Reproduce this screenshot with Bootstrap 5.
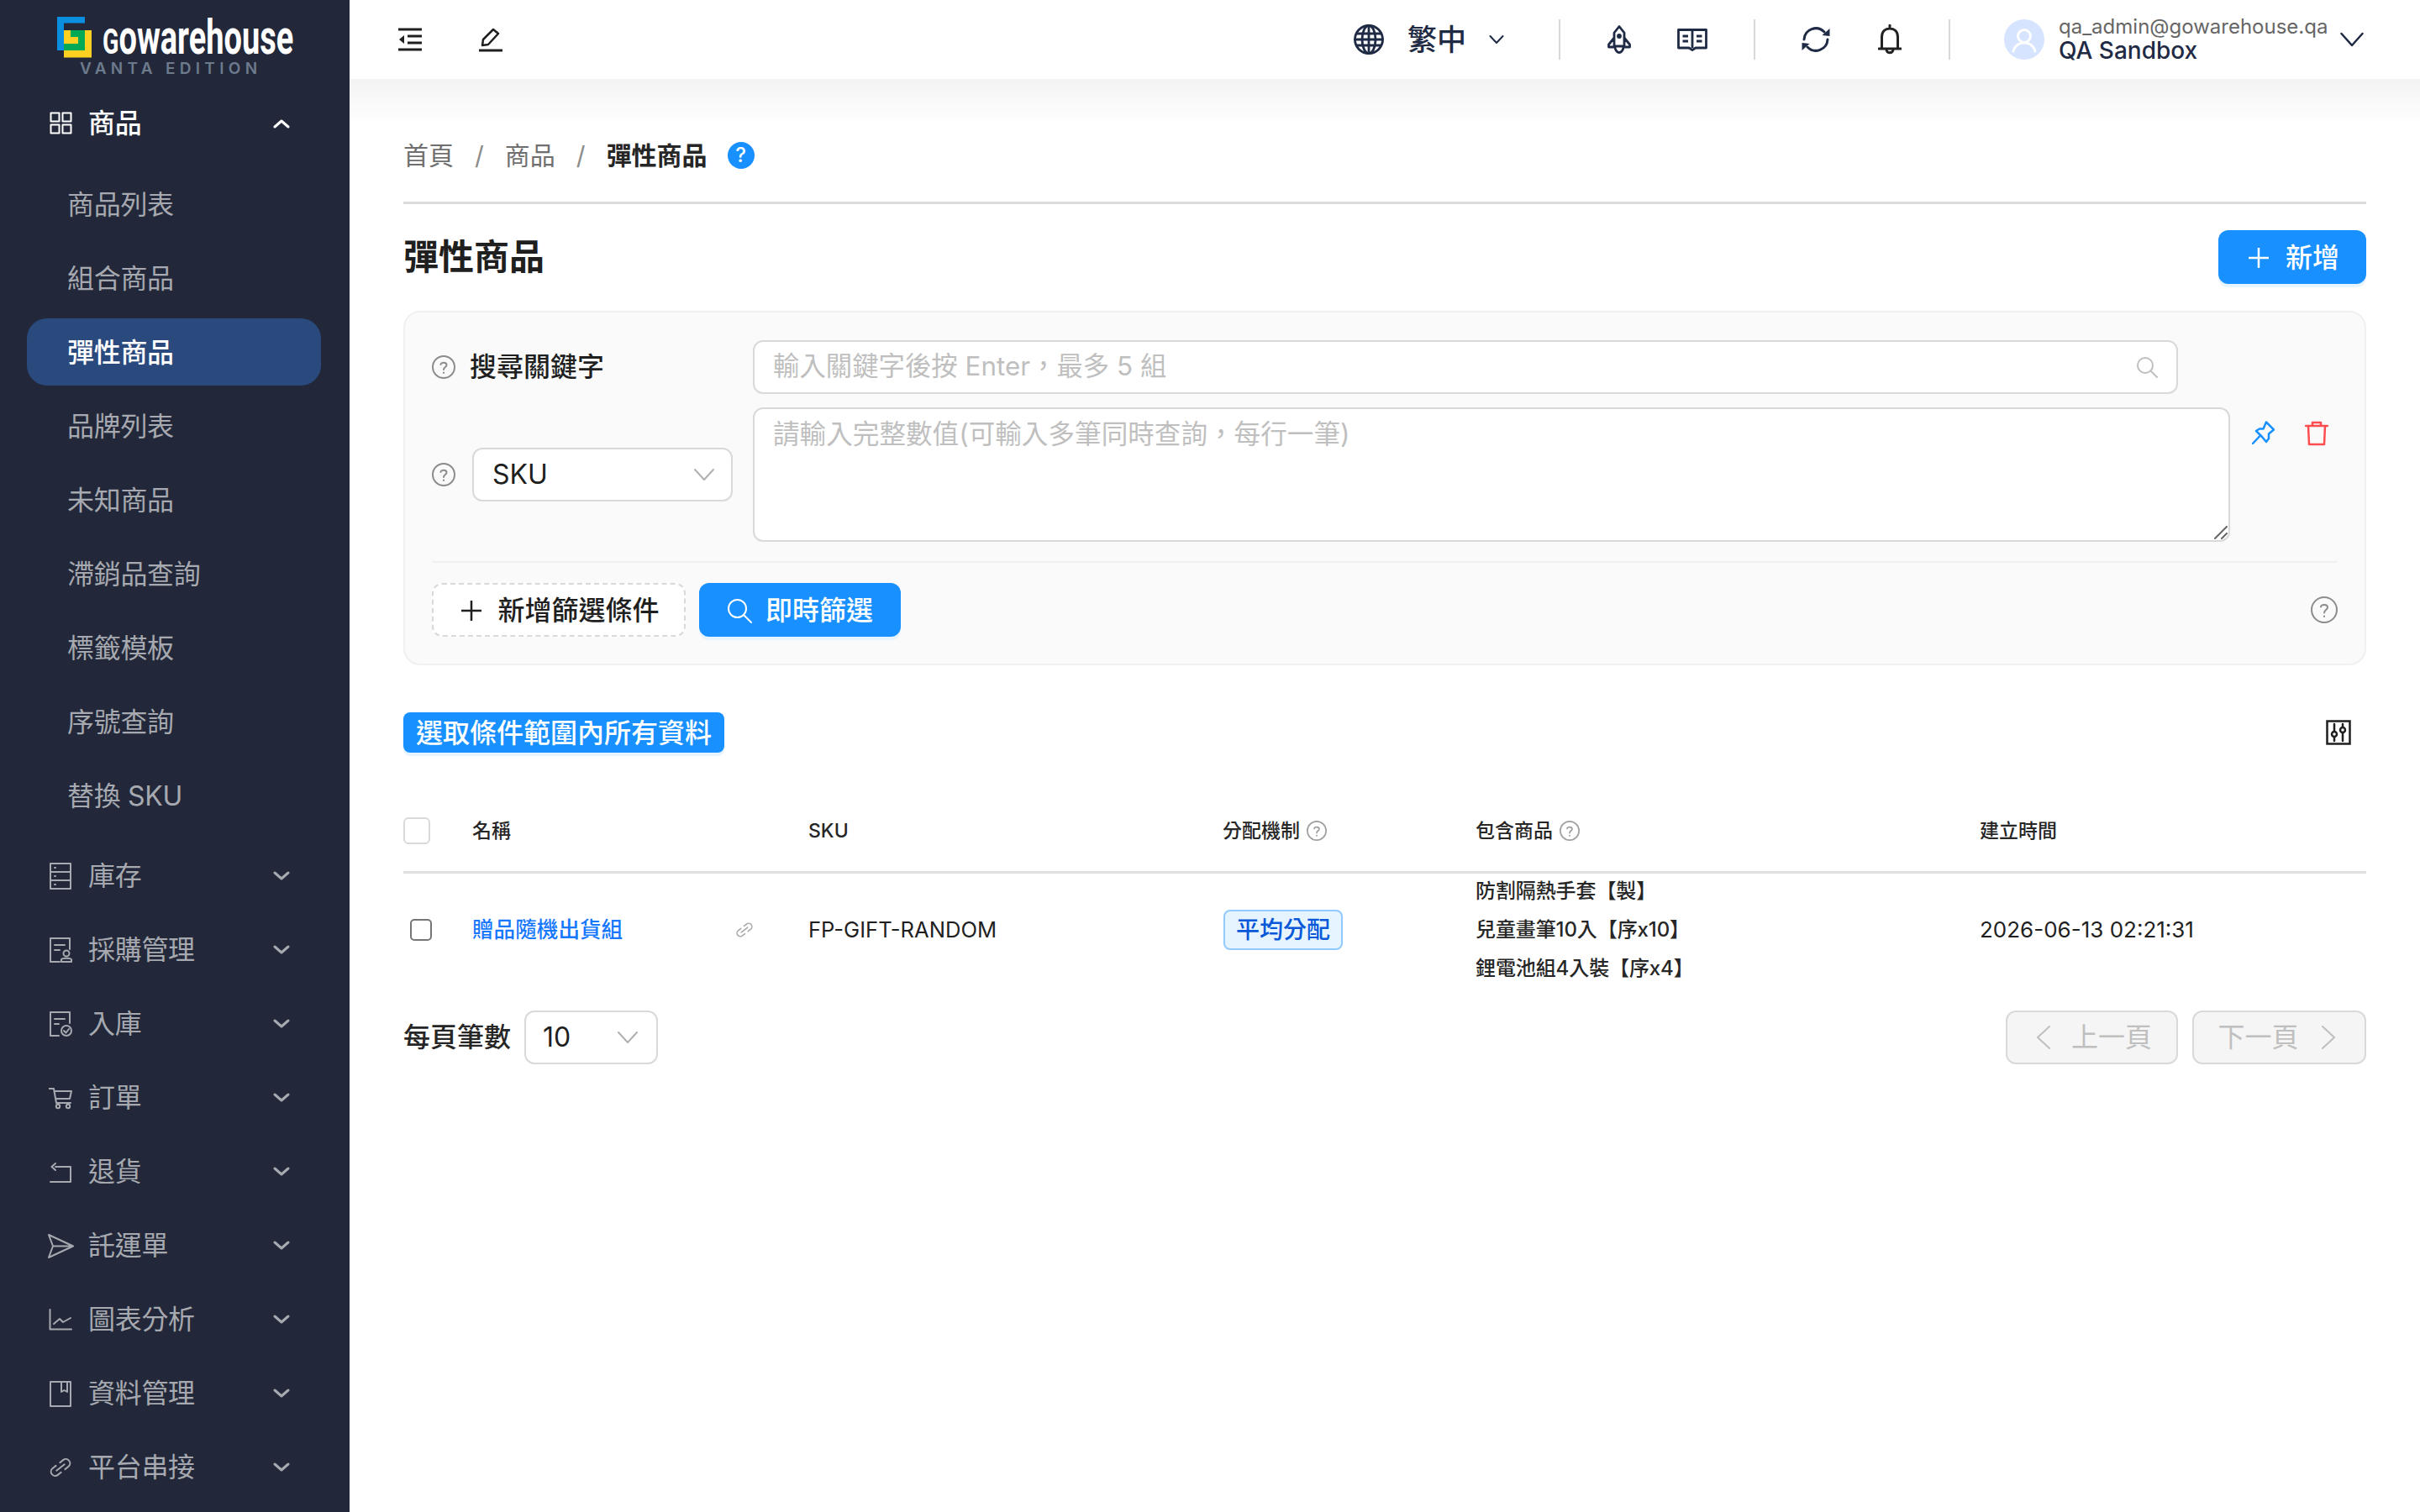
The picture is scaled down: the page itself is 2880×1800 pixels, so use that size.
<!DOCTYPE html>
<html lang="zh-Hant">
<head>
<meta charset="utf-8">
<title>彈性商品</title>
<link href="https://cdn.jsdelivr.net/npm/bootstrap@5.3.0/dist/css/bootstrap.min.css" rel="stylesheet">
<style>
html,body{margin:0;height:1800px;overflow:hidden}
body{font-family:Inter,"Noto Sans CJK TC",sans-serif;font-size:32px;color:#1f1f1f;background:#fff}
.app-shell{width:2880px;height:1800px}
svg{display:block;flex:none}
.ico{fill:none;stroke:currentColor;stroke-width:2;stroke-linecap:round;stroke-linejoin:round}

/* sidebar */
.side{width:416px;height:1800px;background:#222839;color:#a7a9b0;flex:none;overflow:hidden}
.logo-wrap{height:94px;padding-left:68px;padding-top:20px}
.logo-words{margin-left:13px;width:232px}
.logo-main{font-family:Roboto,"Liberation Sans",sans-serif;font-weight:700;font-size:40px;line-height:42px;color:#fff;white-space:nowrap;transform:scale(.95,1.42);transform-origin:left bottom;margin-top:13px;height:42px}
.logo-g{font-size:30px}
.logo-sub{font-family:Inter,sans-serif;font-weight:600;font-size:19px;line-height:16px;letter-spacing:5.3px;color:#6d7a8c;margin-top:-1px;margin-left:-27px;white-space:nowrap}
.ic-slot{width:26px;flex:none;display:flex;justify-content:center;align-items:center}
.menu-top{height:109px;padding:0 71px 4px 59px;color:#fff}
.menu-next{height:88px;padding:0 71px 0 59px}
.menu-next.gap-first{margin-top:12px}
.lbl{margin-left:20px;flex:1;font-size:32px;line-height:1;letter-spacing:-.3px}
.menu-sub{height:80px;margin:0 34px 8px 32px;padding-left:48px;padding-top:2px;border-radius:24px;font-size:32px;line-height:1;letter-spacing:-.3px}
.menu-sub.on{background:#2a4a7e;color:#fff;font-weight:500}

/* topbar */
.topbar{height:94px;padding:0 67px 0 54px;color:#1f2a44}
.top-shadow{height:54px;background:linear-gradient(#f3f3f3,#fff)}
.tbtn-left{color:#1f1f1f}
.sep-v{width:2px;height:48px;background:#d9d9d9}
.lang{font-size:35px;line-height:1;font-weight:500}
.who-mail{font-size:24px;line-height:26px;color:#666}
.who-name{font-size:28px;line-height:30px;font-weight:500;color:#1f2a44}
.avatar{width:48px;height:48px;border-radius:50%;background:#d6e4ff}

/* page */
.page{padding:0 64px 0 64px}
.crumbs{height:74px;font-size:30px;line-height:1}
.crumb-g{color:#6f6f6f}
.crumb-s{color:#8c8c8c;margin:0 25px}
.crumb-c{color:#262626;font-weight:600}
.rule-h{height:3px;background:#dcdcdc}
.title-row{margin-top:31px;height:64px}
.page-h{font-size:42px;font-weight:700;margin:0;line-height:1;color:#1f1f1f}
.bb{height:64px;border:0;border-radius:12px;background:#1890ff;color:#fff;font-size:32px;line-height:1;font-weight:500;box-shadow:0 4px 0 #e6f4ff;padding-top:2px}
.bb-new{width:176px;gap:19px;padding-left:9px}
.bb-find{width:240px;margin-left:16px;gap:16px}
.panel{margin-top:32px;height:422px;background:#fafafa;border:2px solid #f0f0f0;border-radius:20px;padding:33px 32px 0 32px}
.f-row1{height:64px}
.f-help{width:28px;height:28px;color:#8c8c8c}
.f-label{width:337px;margin-left:17px;color:#1f1f1f;font-weight:500;font-size:32px;line-height:1}
.inp{height:64px;background:#fff;border:2px solid #d9d9d9;border-radius:12px;padding:0 22px;color:#bfbfbf;font-size:31.4px;line-height:1}
.inp-search{width:1696px}
.f-row2{margin-top:16px;height:160px}
.sel{width:310px;height:64px;margin-left:20px;margin-right:24px;background:#fff;border:2px solid #d9d9d9;border-radius:12px;padding:0 20px 0 22px;color:#1f1f1f;font-size:32px;line-height:1}
.ta-wrap{width:1758px;height:160px}
.ta-box{width:100%;height:100%;background:#fff;border:2px solid #d9d9d9;border-radius:12px;padding:12px 22px;color:#bfbfbf;font-size:31.6px;line-height:36px;resize:none;font-family:inherit;outline:0}
.ta-box::placeholder{color:#bfbfbf}
.ta-grip{position:absolute;right:3px;bottom:3px;color:#666}
.act{margin-left:26px;padding-top:16px;gap:36px}
.rule-l{height:2px;background:#f0f0f0;margin-top:23px}
.f-actions{margin-top:24px;height:64px}
.dash{width:302px;height:64px;background:#fff;border:2px dashed #d9d9d9;border-radius:12px;color:#1f1f1f;font-size:32px;line-height:1;font-weight:500;gap:18px;padding:2px 0 0 3px}

.sel-all{height:48px;width:382px;background:#1890ff;color:#fff;border-radius:8px;font-size:32px;line-height:1;font-weight:500;box-shadow:0 4px 0 #e6f4ff;border:0;padding-top:2px}
.sel-row{height:48px;padding-right:18px;margin-top:56px}

.thead-row{margin-top:47px;height:97px;padding-bottom:2px;border-bottom:3px solid #e0e0e0;font-size:23px;font-weight:500;line-height:1;color:#262626}
.c0{width:82px;flex:none}
.c1{width:400px;flex:none}
.c2{width:493px;flex:none}
.c3{width:301px;flex:none}
.c4{width:600px;flex:none}
.cb{width:32px;height:32px;border:2px solid #d9d9d9;border-radius:6px;background:#fff}
.cb2{width:26px;height:26px;margin-left:8px;border:2px solid #767676;border-radius:5px;background:#fff}
.tbody-row{height:133px;font-size:25.6px;line-height:1;color:#1f1f1f}
.lnk{color:#1677ff;text-decoration:none;font-weight:500}
.chip{height:48px;width:142px;margin-left:1px;background:#e6f4ff;border:2px solid #91caff;border-radius:8px;color:#0958d9;font-size:28px;font-weight:500;line-height:1}
.goods div{font-size:24px;line-height:46px;color:#262626;font-weight:500;letter-spacing:-.1px}
.date-cell{font-size:26px}
.pager{margin-top:30px;height:64px}
.pg-lbl{font-size:32px;line-height:1;font-weight:500;margin-right:16px;color:#262626}
.sel-sm{width:159px;height:64px;border:2px solid #d9d9d9;border-radius:12px;padding:0 22px 0 20px;background:#fff;font-size:32px;line-height:1}
.pg-btn{height:64px;border:2px solid #d9d9d9;border-radius:12px;background:#f5f5f5;color:#bfbfbf;font-size:32px;line-height:1;gap:24px}
.pg-prev{width:205px;padding-left:5px}
.pg-next{width:207px;margin-left:17px;gap:26px;padding-right:6px}
</style>
</head>
<body>
<div class="app-shell d-flex">

<aside class="side">
  <div class="logo-wrap d-flex">
    <svg width="41" height="49" viewBox="0 0 41 49">
      <path fill="#0a8fe0" d="M0 0H33V7.500H8V40H0Z"/>
      <rect x="8" y="16" width="33" height="32.500" fill="#fdd122"/>
      <path fill="#04a955" d="M16 16H33V40H8V32H25V24H16Z"/>
    </svg>
    <div class="logo-words">
      <div class="logo-main"><span class="logo-g">G</span>owarehouse</div>
      <div class="logo-sub">VANTA EDITION</div>
    </div>
  </div>

  <div class="menu-top d-flex align-items-center">
    <span class="ic-slot"><svg class="ico" width="27" height="27" viewBox="0 0 27 27"><rect x="1.500" y="1.500" width="10" height="10"/><rect x="15.500" y="1.500" width="10" height="10"/><rect x="1.500" y="15.500" width="10" height="10"/><rect x="15.500" y="15.500" width="10" height="10"/></svg></span>
    <span class="lbl fw-medium">商品</span>
    <svg class="ico" style="stroke-width:3" width="20" height="12" viewBox="0 0 20 12"><path d="M2 10 10 3 18 10"/></svg>
  </div>
  <div class="menu-sub d-flex align-items-center">商品列表</div>
  <div class="menu-sub d-flex align-items-center">組合商品</div>
  <div class="menu-sub on d-flex align-items-center">彈性商品</div>
  <div class="menu-sub d-flex align-items-center">品牌列表</div>
  <div class="menu-sub d-flex align-items-center">未知商品</div>
  <div class="menu-sub d-flex align-items-center">滯銷品查詢</div>
  <div class="menu-sub d-flex align-items-center">標籤模板</div>
  <div class="menu-sub d-flex align-items-center">序號查詢</div>
  <div class="menu-sub d-flex align-items-center">替換 SKU</div>

  <div class="menu-next gap-first d-flex align-items-center">
    <span class="ic-slot"><svg class="ico" width="26" height="32" viewBox="0 0 26 32"><rect x="1" y="1" width="24" height="30"/><path d="M1 11H25M1 21H25M6 6H7M6 16H7M6 26H7"/></svg></span>
    <span class="lbl">庫存</span>
    <svg class="ico" style="stroke-width:3" width="20" height="12" viewBox="0 0 20 12"><path d="M2 2 10 9 18 2"/></svg>
  </div>
  <div class="menu-next d-flex align-items-center">
    <span class="ic-slot"><svg class="ico" width="27" height="30" viewBox="0 0 27 30"><path d="M12 29H1V1H24V14M6 9H18M6 15H12"/><circle cx="20" cy="19" r="3.500"/><path d="M14 29V26.500C14 24 26 24 26 26.500V29Z"/></svg></span>
    <span class="lbl">採購管理</span>
    <svg class="ico" style="stroke-width:3" width="20" height="12" viewBox="0 0 20 12"><path d="M2 2 10 9 18 2"/></svg>
  </div>
  <div class="menu-next d-flex align-items-center">
    <span class="ic-slot"><svg class="ico" width="27" height="30" viewBox="0 0 27 30"><path d="M11 29H1V1H24V14M6 9H18M6 15H11"/><ellipse cx="20" cy="23" rx="6" ry="6"/><path d="M17 23 19.500 25.500 23 21"/></svg></span>
    <span class="lbl">入庫</span>
    <svg class="ico" style="stroke-width:3" width="20" height="12" viewBox="0 0 20 12"><path d="M2 2 10 9 18 2"/></svg>
  </div>
  <div class="menu-next d-flex align-items-center">
    <span class="ic-slot"><svg class="ico" width="28" height="27" viewBox="0 0 28 27"><path d="M0 2H6L9 19H26M7 5H27L25 14H8.500"/><circle cx="11" cy="23" r="2.200"/><circle cx="23" cy="23" r="2.200"/></svg></span>
    <span class="lbl">訂單</span>
    <svg class="ico" style="stroke-width:3" width="20" height="12" viewBox="0 0 20 12"><path d="M2 2 10 9 18 2"/></svg>
  </div>
  <div class="menu-next d-flex align-items-center">
    <span class="ic-slot"><svg class="ico" width="26" height="25" viewBox="0 0 26 25"><path d="M7 6H25V24H1M7 2 2.500 6 7 10"/></svg></span>
    <span class="lbl">退貨</span>
    <svg class="ico" style="stroke-width:3" width="20" height="12" viewBox="0 0 20 12"><path d="M2 2 10 9 18 2"/></svg>
  </div>
  <div class="menu-next d-flex align-items-center">
    <span class="ic-slot"><svg class="ico" width="31" height="31" viewBox="0 0 31 31"><path d="M1 2 30 15.500 1 29 6 15.500ZM6 15.500H30"/></svg></span>
    <span class="lbl">託運單</span>
    <svg class="ico" style="stroke-width:3" width="20" height="12" viewBox="0 0 20 12"><path d="M2 2 10 9 18 2"/></svg>
  </div>
  <div class="menu-next d-flex align-items-center">
    <span class="ic-slot"><svg class="ico" width="28" height="26" viewBox="0 0 28 26"><path d="M1.500 1V24.500H27M6 18 13 12 17 16 26 11"/></svg></span>
    <span class="lbl">圖表分析</span>
    <svg class="ico" style="stroke-width:3" width="20" height="12" viewBox="0 0 20 12"><path d="M2 2 10 9 18 2"/></svg>
  </div>
  <div class="menu-next d-flex align-items-center">
    <span class="ic-slot"><svg class="ico" width="26" height="31" viewBox="0 0 26 31"><rect x="1" y="1" width="24" height="29"/><path d="M14 1V13L17.500 11 21 13V1"/></svg></span>
    <span class="lbl">資料管理</span>
    <svg class="ico" style="stroke-width:3" width="20" height="12" viewBox="0 0 20 12"><path d="M2 2 10 9 18 2"/></svg>
  </div>
  <div class="menu-next d-flex align-items-center">
    <span class="ic-slot"><svg class="ico" width="28" height="28" viewBox="0 0 28 28"><g transform="rotate(-38 14 14)"><path d="M11 9H6A5 5 0 0 0 6 19H11"/><path d="M17 9H22A5 5 0 0 1 22 19H17"/><path d="M8 14H20"/></g></svg></span>
    <span class="lbl">平台串接</span>
    <svg class="ico" style="stroke-width:3" width="20" height="12" viewBox="0 0 20 12"><path d="M2 2 10 9 18 2"/></svg>
  </div>
</aside>

<main class="flex-grow-1">
  <div class="topbar d-flex align-items-center">
    <svg class="ico tbtn-left" width="30" height="28" viewBox="0 0 30 28" style="margin-left:3px"><path d="M1 2H29M12 10H29M12 18H29M1 26H29" stroke-width="3" stroke-linecap="butt"/><path d="M8 9 2 14 8 19Z" fill="currentColor" stroke="none"/></svg>
    <svg class="ico tbtn-left" width="30" height="30" viewBox="0 0 30 30" style="margin-left:66px"><path d="M1 28H29" stroke-width="3" stroke-linecap="butt"/><path d="M5 22 6 15 18 3 24 8 12 21Z" stroke-width="2.500"/></svg>

    <div class="ms-auto d-flex align-items-center">
      <svg class="ico" style="stroke-width:2.800" width="36" height="36" viewBox="0 0 36 36"><circle cx="18" cy="18" r="16.500"/><ellipse cx="18" cy="18" rx="8" ry="16.500"/><path d="M18 1.500V34.500M3.500 11H32.500M3.500 25H32.500M1.500 18H34.500"/></svg>
      <span class="lang" style="margin-left:28px">繁中</span>
      <svg class="ico" width="18" height="12" viewBox="0 0 18 12" style="margin-left:27px"><path d="M1.500 2 9 10 16.500 2"/></svg>
      <div class="sep-v" style="margin-left:65px"></div>
      <svg class="ico" style="margin-left:56px;stroke-width:2.800" width="28" height="34" viewBox="0 0 28 34"><path d="M14 1.500 20 9V25H8V9ZM8 15 1.500 23V26H8M20 15 26.500 23V26H20M9 26C9 30 12 32.500 14 32.500S19 30 19 26"/><circle cx="14" cy="13" r="1.500" fill="currentColor"/></svg>
      <svg class="ico" style="margin-left:55px;stroke-width:2.800" width="36" height="28" viewBox="0 0 36 28"><path d="M18 2.500H1.500V24H14L18 26.500 22 24H34.500V2.500ZM18 2.500V24M6.500 10H13M6.500 16H13M23 10H29.500M23 16H29.500" stroke-linecap="butt"/></svg>
      <div class="sep-v" style="margin-left:55px"></div>
      <svg class="ico" style="margin-left:55px;stroke-width:3" width="34" height="34" viewBox="0 0 34 34"><path d="M3 17A14 14 0 0 1 27 8M31 17A14 14 0 0 1 7 26"/><path d="M33.500 4 33.500 13 24.500 12Z M.5 30 .5 21 9.500 22Z" fill="currentColor" stroke="none"/></svg>
      <svg class="ico" style="margin-left:57px;color:#222;stroke-width:3" width="28" height="36" viewBox="0 0 28 36"><path d="M14 1V5M4.500 29V15C4.500 8 9 5 14 5S23.500 8 23.500 15V29M1 29H27M10 30C10 35 18 35 18 30"/></svg>
      <div class="sep-v" style="margin-left:56px"></div>
      <div class="avatar d-flex align-items-center justify-content-center" style="margin-left:64px">
        <svg width="48" height="48" viewBox="0 0 48 48" fill="none" stroke="#fff" stroke-width="3" stroke-linecap="round"><circle cx="24" cy="20" r="7.500"/><path d="M11 38C13 31 18 28 24 28S35 31 37 38"/></svg>
      </div>
      <div style="margin-left:17px;width:317px">
        <div class="who-mail">qa_admin@gowarehouse.qa</div>
        <div class="who-name">QA Sandbox</div>
      </div>
      <svg class="ico" width="28" height="18" viewBox="0 0 28 18" style="margin-left:18px;stroke-width:2.500"><path d="M1.500 2 14 16 26.500 2"/></svg>
    </div>
  </div>
  <div class="top-shadow"></div>

  <div class="page">
    <div class="crumbs d-flex align-items-center">
      <span class="crumb-g">首頁</span><span class="crumb-s">/</span><span class="crumb-g">商品</span><span class="crumb-s">/</span><span class="crumb-c">彈性商品</span>
      <span class="d-flex align-items-center justify-content-center rounded-circle text-white ms-4" style="width:32px;height:32px;background:#1890ff;font-size:24px;font-weight:500">?</span>
    </div>
    <div class="rule-h" style="margin-top:18px"></div>

    <div class="title-row d-flex align-items-center justify-content-between">
      <h1 class="page-h">彈性商品</h1>
      <button class="bb bb-new d-flex align-items-center justify-content-center">
        <svg class="ico" width="26" height="26" viewBox="0 0 26 26"><path d="M13 1V25M1 13H25" stroke-linecap="butt" stroke-width="2.500"/></svg>新增
      </button>
    </div>

    <section class="panel">
      <div class="f-row1 d-flex align-items-center">
        <svg class="f-help ico" viewBox="0 0 28 28"><circle cx="14" cy="14" r="13"/><path d="M10.500 11C10.500 8 17.500 8 17.500 11.500 17.500 14 14 14 14 17M14 20.500V21"/></svg>
        <span class="f-label">搜尋關鍵字</span>
        <div class="inp inp-search d-flex align-items-center justify-content-between">
          <span>輸入關鍵字後按 Enter，最多 5 組</span>
          <svg class="ico" style="color:#bfbfbf" width="26" height="26" viewBox="0 0 26 26"><circle cx="11" cy="11" r="9"/><path d="M18 18 25 25"/></svg>
        </div>
      </div>
      <div class="f-row2 d-flex">
        <div class="d-flex align-items-center">
          <svg class="f-help ico" viewBox="0 0 28 28"><circle cx="14" cy="14" r="13"/><path d="M10.500 11C10.500 8 17.500 8 17.500 11.500 17.500 14 14 14 14 17M14 20.500V21"/></svg>
          <div class="sel d-flex align-items-center justify-content-between">
            <span>SKU</span>
            <svg class="ico" style="color:#b0b0b0" width="24" height="14" viewBox="0 0 24 14"><path d="M1 1 12 13 23 1"/></svg>
          </div>
        </div>
        <div class="ta-wrap position-relative">
          <textarea class="ta-box" placeholder="請輸入完整數值(可輸入多筆同時查詢，每行一筆)"></textarea>
          <svg class="ta-grip ico" width="16" height="16" viewBox="0 0 16 16" stroke-linecap="butt"><path d="M1 15 15 1M9 15 15 9"/></svg>
        </div>
        <div class="act d-flex align-items-start">
          <svg class="ico" style="color:#1890ff;stroke-width:2.500" width="27" height="28" viewBox="0 0 27 28"><path d="M17 1.500 26 10.500 20 15.500 20 21 17 25 12 19 5 12 9 9.500 13.500 9.500ZM9 18.500 1 27"/></svg>
          <svg class="ico" style="color:#ff4d4f;stroke-width:2.500" width="28" height="30" viewBox="0 0 28 30"><path d="M1 6H27M9 6V2H19V6M4 6 5 28H23L24 6"/></svg>
        </div>
      </div>
      <div class="rule-l"></div>
      <div class="f-actions d-flex align-items-center">
        <button class="dash d-flex align-items-center justify-content-center">
          <svg class="ico" width="26" height="26" viewBox="0 0 26 26"><path d="M13 1V25M1 13H25" stroke-linecap="butt" stroke-width="2.500"/></svg>新增篩選條件
        </button>
        <button class="bb bb-find d-flex align-items-center justify-content-center">
          <svg class="ico" width="30" height="30" viewBox="0 0 30 30" stroke-width="2.500"><circle cx="12.500" cy="12.500" r="10.500"/><path d="M20 20 29 29"/></svg>即時篩選
        </button>
        <svg class="ico ms-auto" style="color:#8c8c8c" width="32" height="32" viewBox="0 0 32 32"><circle cx="16" cy="16" r="15"/><path d="M12 12.500C12 9 20 9 20 13 20 16 16 16 16 19.500M16 23.500V24"/></svg>
      </div>
    </section>

    <div class="sel-row d-flex align-items-center justify-content-between">
      <button class="sel-all d-flex align-items-center justify-content-center">選取條件範圍內所有資料</button>
      <svg class="ico" style="color:#1f1f1f" width="30" height="30" viewBox="0 0 30 30"><rect x="1.500" y="1.500" width="27" height="27" stroke-linecap="butt" stroke-linejoin="miter" stroke-width="2.500"/><path d="M10 5V25M20 5V25" stroke-width="2.500"/><circle cx="10" cy="17" r="3" fill="#fff" stroke-width="2.500"/><circle cx="20" cy="12" r="3" fill="#fff" stroke-width="2.500"/></svg>
    </div>

    <div class="thead-row d-flex align-items-center">
      <div class="c0"><div class="cb"></div></div>
      <div class="c1">名稱</div>
      <div class="c2">SKU</div>
      <div class="c3 d-flex align-items-center gap-2">分配機制
        <svg class="ico" style="color:#a0a0a0" width="24" height="24" viewBox="0 0 28 28"><circle cx="14" cy="14" r="13"/><path d="M10.500 11C10.500 8 17.500 8 17.500 11.500 17.500 14 14 14 14 17M14 20.500V21"/></svg>
      </div>
      <div class="c4 d-flex align-items-center gap-2">包含商品
        <svg class="ico" style="color:#a0a0a0" width="24" height="24" viewBox="0 0 28 28"><circle cx="14" cy="14" r="13"/><path d="M10.500 11C10.500 8 17.500 8 17.500 11.500 17.500 14 14 14 14 17M14 20.500V21"/></svg>
      </div>
      <div>建立時間</div>
    </div>

    <div class="tbody-row d-flex align-items-center">
      <div class="c0"><div class="cb2"></div></div>
      <div class="c1 d-flex align-items-center">
        <a class="lnk" href="#">贈品隨機出貨組</a>
        <svg class="ico" style="color:#a8a8a8;margin-left:134px" width="22" height="22" viewBox="0 0 28 28"><g transform="rotate(-38 14 14)"><path d="M11 9H6A5 5 0 0 0 6 19H11"/><path d="M17 9H22A5 5 0 0 1 22 19H17"/><path d="M8 14H20"/></g></svg>
      </div>
      <div class="c2">FP-GIFT-RANDOM</div>
      <div class="c3"><span class="chip d-flex align-items-center justify-content-center">平均分配</span></div>
      <div class="c4 goods">
        <div>防割隔熱手套【製】</div>
        <div>兒童畫筆10入【序x10】</div>
        <div>鋰電池組4入裝【序x4】</div>
      </div>
      <div class="date-cell">2026-06-13 02:21:31</div>
    </div>

    <div class="pager d-flex align-items-center">
      <span class="pg-lbl">每頁筆數</span>
      <div class="sel-sm d-flex align-items-center justify-content-between">
        <span>10</span>
        <svg class="ico" style="color:#b0b0b0" width="24" height="14" viewBox="0 0 24 14"><path d="M1 1 12 13 23 1"/></svg>
      </div>
      <div class="pg-btn pg-prev d-flex align-items-center justify-content-center ms-auto">
        <svg class="ico" width="18" height="28" viewBox="0 0 18 28"><path d="M16 1 2 14 16 27"/></svg>上一頁
      </div>
      <div class="pg-btn pg-next d-flex align-items-center justify-content-center">
        下一頁<svg class="ico" width="18" height="28" viewBox="0 0 18 28"><path d="M2 1 16 14 2 27"/></svg>
      </div>
    </div>
  </div>
</main>
</div>
<script src="https://cdn.jsdelivr.net/npm/bootstrap@5.3.0/dist/js/bootstrap.bundle.min.js"></script>
</body>
</html>
